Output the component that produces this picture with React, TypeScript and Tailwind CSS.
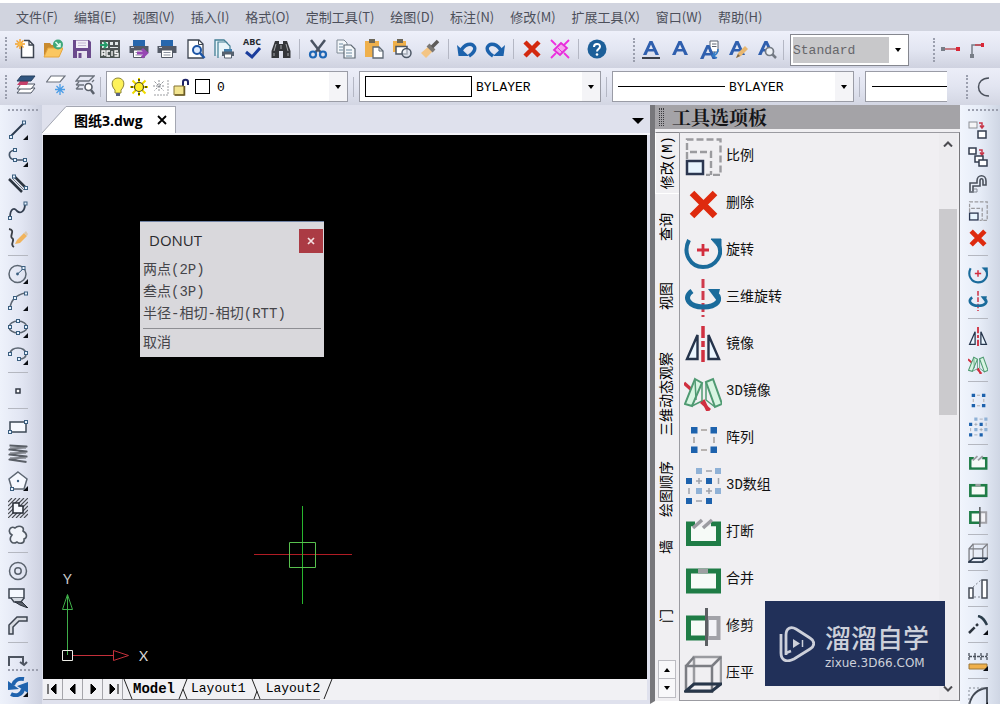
import React from 'react';

type IconProps = { className?: string };
type IconType = React.FC<IconProps>;

interface ToolItem {
  label: string;
  icon: IconType;
}

// All toolbar icons are drawn on a 20x20 grid
const Svg: React.FC<{ children: React.ReactNode; className?: string; size?: number }> = ({ children, className = 'w-5 h-5', size = 20 }) => (
  <svg viewBox={`0 0 ${size} ${size}`} className={`${className} shrink-0`} fill="none" aria-hidden="true">
    {children}
  </svg>
);

const dark = '#3d4450';

/* ---------- Standard toolbar ---------- */

const NewIcon: IconType = () => (
  <Svg>
    <path d="M6.500 5.500V18.500H18.500V6L14 1.500H9" fill="#fff" stroke={dark} strokeWidth="1.500" />
    <path d="M14 1.500V6H18.500" stroke={dark} strokeWidth="1.300" />
    <path d="M5 0V10M0 5H10M1.500 1.500L8.500 8.500M8.500 1.500L1.500 8.500" stroke="#f2a02c" strokeWidth="1.400" />
    <circle cx="5" cy="5" r="2" fill="#fbbd4a" />
  </Svg>
);

const OpenIcon: IconType = () => (
  <Svg>
    <path d="M1 17V4H7L8.500 6H14V10H5Z" fill="#c98a2e" />
    <path d="M1 18L5 9H20L16 18Z" fill="#fbc760" stroke="#e6a53b" />
    <circle cx="15" cy="5.500" r="5" fill="#3fa77b" />
    <path d="M12.500 3L17 7.500M17 4V7.500H13.500" stroke="#e4fff0" strokeWidth="1.500" />
  </Svg>
);

const SaveIcon: IconType = () => (
  <Svg>
    <path d="M1 1H17L19 3V19H1Z" fill="#6b4a8c" />
    <path d="M4 1.500H16V9H4Z" fill="#f1eef6" />
    <path d="M6 4H14M6 6.500H14" stroke="#c4b8d3" />
    <path d="M5 12H15V19H5Z" fill="#e8e3ef" />
    <path d="M6.500 14H9.500V19H6.500Z" fill="#6b4a8c" />
  </Svg>
);

const AcisIcon: IconType = () => (
  <Svg>
    <path d="M0 1H20V19H0Z" fill="#4c5553" />
    <path d="M2 3H8V9H2ZM10 3H13V6H10ZM15 3H18V6H15ZM10 8H18V9H10Z" fill="#dfe9e6" />
    <path d="M0 6H6M4 3L7 6L4 9" stroke="#239b68" strokeWidth="2" />
    <path d="M2 17V12H5V17M2 15H5M10 12H7V17H10M12 12V17M18 12H15V14.500H18V17H14.500" stroke="#fff" strokeWidth="1.300" />
  </Svg>
);

const PrinterBody = () => (
  <>
    <path d="M4 1H16V7H4Z" fill="#2767ad" />
    <path d="M0.500 7H19.500V14H0.500Z" fill="#545a66" />
    <path d="M2 8.500H5" stroke="#c9d1dd" />
    <path d="M4.500 11H15.500V18.500H4.500Z" fill="#fff" stroke="#545a66" />
    <path d="M6.500 13.500H13.500M6.500 16H13.500" stroke="#8b92a0" />
  </>
);

const PlotIcon: IconType = () => (
  <Svg>
    <PrinterBody />
    <path d="M8 14H16M13 10L17.500 14L13 18.500" stroke="#9647b3" strokeWidth="3" />
  </Svg>
);

const PrintIcon: IconType = () => (
  <Svg><PrinterBody /></Svg>
);

const PreviewIcon: IconType = () => (
  <Svg>
    <path d="M2 1H13L17 5V19H2Z" fill="#fff" stroke={dark} strokeWidth="1.300" />
    <path d="M12.500 1V5.500H17" stroke={dark} />
    <circle cx="11" cy="11" r="4" fill="#dcebff" stroke="#1d55a5" strokeWidth="2" />
    <path d="M14 14L18.500 19" stroke="#1d55a5" strokeWidth="2.500" />
  </Svg>
);

const PublishIcon: IconType = () => (
  <Svg>
    <path d="M1 17V1H10L13 4V8" fill="#e9f5fa" stroke="#427e94" strokeWidth="1.300" />
    <path d="M4 19V3H12L16 7V10" fill="#e9f5fa" stroke="#427e94" strokeWidth="1.200" />
    <path d="M10 10H18V13H10Z" fill="#427eac" />
    <path d="M8 12.500H20V17H8Z" fill="#56616f" />
    <path d="M10.500 15H17.500V19H10.500Z" fill="#fff" stroke="#56616f" />
  </Svg>
);

const SpellIcon: IconType = () => (
  <Svg className="w-5 h-5 overflow-visible">
    <text x="0" y="6" fontSize="9" fontWeight="700" fontFamily="Open Sans, sans-serif" fill="#25282e">ABC</text>
    <path d="M3 13L9 18L17 9" stroke="#1b3d9c" strokeWidth="3" />
  </Svg>
);

const FindIcon: IconType = () => (
  <Svg>
    <path d="M4 2H8V5H12V2H16L19.500 12V19H12V12H8V19H0.500V12Z" fill="#34363a" />
    <path d="M5 5L3 12M15 5L17 12M10 6V10M3 14V17M17 14V17" stroke="#a6a8ac" />
  </Svg>
);

const CutIcon: IconType = () => (
  <Svg>
    <path d="M3 1L13 14M17 1L7 14" stroke="#4a5362" strokeWidth="2.500" />
    <circle cx="5" cy="15.500" r="3" stroke="#1d66b5" strokeWidth="2.200" />
    <circle cx="15" cy="15.500" r="3" stroke="#1d66b5" strokeWidth="2.200" />
  </Svg>
);

const CopyIcon: IconType = () => (
  <Svg>
    <path d="M1 1H8L11 4V14H1Z" fill="#f4f7fa" stroke="#7f8994" />
    <path d="M8 6H15L19 10V19H8Z" fill="#f4f7fa" stroke="#5d6873" strokeWidth="1.200" />
    <path d="M3 5H7M3 8H7M3 11H7M10 11H16M10 14H16M10 17H16" stroke="#6d8ba1" />
  </Svg>
);

const PasteIcon: IconType = () => (
  <Svg>
    <path d="M1 2H15V18H1Z" fill="#efb04b" />
    <path d="M5 0H11V4H5Z" fill="#6d6757" />
    <path d="M9 8H15L19 12V19H9Z" fill="#fff" stroke="#5d6873" strokeWidth="1.300" />
    <path d="M15 8V12H19" stroke="#5d6873" />
  </Svg>
);

const PasteBlockIcon: IconType = () => (
  <Svg>
    <path d="M1 2H14V13H1Z" fill="#efb04b" />
    <path d="M5 0H11V4H5Z" fill="#6d6757" />
    <path d="M4 7.500H15V15H4Z" fill="#fff" stroke="#4b5664" strokeWidth="1.500" />
    <circle cx="14.500" cy="14" r="4.500" fill="#dfe5ee" fillOpacity=".6" stroke="#4b5664" strokeWidth="1.500" />
  </Svg>
);

const BrushIcon: IconType = () => (
  <Svg>
    <path d="M1 14L9 7L13 12L6 19Z" fill="#f4c584" />
    <path d="M8 6L14 12" stroke="#7b7875" strokeWidth="4" />
    <path d="M12 8L18 2" stroke="#5d5b5a" strokeWidth="3.500" />
  </Svg>
);

const UndoIcon: IconType = () => (
  <Svg>
    <path d="M4 12C7 5 15 3 17.500 8C19 12 15 15 12 17" stroke="#1c62ac" strokeWidth="3.400" />
    <path d="M0 6L1.500 17H12Z" fill="#1c62ac" />
  </Svg>
);

const RedoIcon: IconType = () => (
  <Svg>
    <path d="M16 12C13 5 5 3 2.500 8C1 12 5 15 8 17" stroke="#1c62ac" strokeWidth="3.400" />
    <path d="M20 6L18.500 17H8Z" fill="#1c62ac" />
  </Svg>
);

const XIcon: IconType = () => (
  <Svg><path d="M3 3L17 17M17 3L3 17" stroke="#d3290f" strokeWidth="4.500" /></Svg>
);

const PurgeIcon: IconType = () => (
  <Svg>
    <path d="M1 1L6 6M19 1L14 6M1 19L6 14M19 19L14 14" stroke="#ee2fe0" strokeWidth="1.800" />
    <path d="M11 4L17 9L10 16L4 11Z" fill="#f5a3ee" stroke="#e52bd8" strokeWidth="1.800" />
    <path d="M8 9L12 13" stroke="#e52bd8" />
  </Svg>
);

const HelpIcon: IconType = () => (
  <Svg>
    <circle cx="10" cy="10" r="9.500" fill="#1d5f99" />
    <path d="M7 8C7 4 13 4 13 7.500C13 10 10 10 10 12.500" stroke="#fff" strokeWidth="2" />
    <circle cx="10" cy="15.500" r="1.300" fill="#fff" />
  </Svg>
);

/* ---------- Text toolbar ---------- */

const LetterA = () => <path d="M2 15L8.500 1H11.500L18 15H14.500L13 11.500H7L5.500 15ZM8 9H12L10 4.500Z" fill="#2f5fae" />;

const TextUnderlineIcon: IconType = () => (
  <Svg><LetterA /><path d="M1 18H19" stroke="#3a3f4a" strokeWidth="2" /></Svg>
);
const TextIcon: IconType = () => (
  <Svg><LetterA /></Svg>
);
const TextNoteIcon: IconType = () => (
  <Svg>
    <path d="M11 1H19V12H11Z" fill="#fff" stroke="#5d6470" />
    <path d="M13 4H17.500M13 6.500H17.500" stroke="#5d6470" />
    <g transform="translate(-1 4)"><LetterA /></g>
    <path d="M19 9C19 13 17 15 14 16M16 12L13.500 16L18 18" stroke="#2f79c6" strokeWidth="1.500" />
  </Svg>
);
const TextEditIcon: IconType = () => (
  <Svg>
    <g transform="translate(-1 0)"><LetterA /></g>
    <path d="M8 18L10 13L17 6L20 9L13 16Z" fill="#e8b770" />
    <path d="M8 18L10 14L12 16Z" fill="#77664e" />
  </Svg>
);
const TextFindIcon: IconType = () => (
  <Svg>
    <g transform="translate(-1 0)"><LetterA /></g>
    <circle cx="12.500" cy="11.500" r="4" fill="#edf0f5" stroke="#747a84" strokeWidth="1.700" />
    <path d="M15.500 14.500L19 18" stroke="#747a84" strokeWidth="2.500" />
  </Svg>
);

const DimLineIcon: IconType = () => (
  <Svg><path d="M2 9H18" stroke="#b85a62" strokeWidth="1.500" /><path d="M0 7H4V11H0Z" fill="#777d87" /><path d="M15 7H19V11H15Z" fill="#da2637" /></Svg>
);
const DimElbowIcon: IconType = () => (
  <Svg><path d="M3 16V5H14" stroke="#777d87" strokeWidth="1.500" /><path d="M6 5H14" stroke="#c9414c" strokeWidth="1.500" /><path d="M1 14H5V18H1Z" fill="#777d87" /><path d="M12 3H15V7H12Z" fill="#da2637" /></Svg>
);
const ArcIcon: IconType = () => (
  <Svg><path d="M17 1C3 1 3 19 17 19" stroke="#4b515c" strokeWidth="1.500" /></Svg>
);

/* ---------- Layer toolbar ---------- */

const LayersIcon: IconType = () => (
  <Svg>
    <path d="M5 13H19L15 18H1Z" fill="#fff" stroke="#4d5563" />
    <path d="M5 9H19L15 14H1Z" fill="#fff" stroke="#4d5563" />
    <path d="M5 5H13L11 10H1Z" fill="#c5406a" />
    <path d="M5 1H19L15 6H1Z" fill="#315680" stroke="#27415f" />
  </Svg>
);
const LayerFreezeIcon: IconType = () => (
  <Svg>
    <path d="M5 1H19L14 7H0.500Z" fill="#fff" stroke="#6b717c" strokeWidth="1.200" />
    <path d="M14 9V20M9 14.500H19M10.500 11L17.500 18M17.500 11L10.500 18" stroke="#4b9de6" strokeWidth="1.300" />
  </Svg>
);
const LayerFindIcon: IconType = () => (
  <Svg>
    <path d="M5 1H19L14 6H1ZM1 10L4 7M1 10H9M17 7L19 5M1 14L4 11M1 14H8" stroke="#6b717c" strokeWidth="1.300" />
    <circle cx="13.500" cy="12" r="3.500" fill="#fff" stroke="#5a606b" strokeWidth="1.600" />
    <path d="M16 15L19 19" stroke="#5a606b" strokeWidth="2.500" />
  </Svg>
);

const BulbIcon: IconType = () => (
  <Svg><path d="M7 13C2 8 4 1 10 1C16 1 18 8 13 13V16H7Z" fill="#fdf25a" stroke="#8d8537" /><path d="M8 16H12V19H8Z" fill="#5b6383" /></Svg>
);
const SunIcon: IconType = () => (
  <Svg>
    <path d="M10 1V19M1 10H19M3.500 3.500L16.500 16.500M16.500 3.500L3.500 16.500" stroke="#f0dc00" strokeWidth="2" />
    <path d="M10 2V4M10 16V18M2 10H4M16 10H18" stroke="#30300c" strokeWidth="1.500" />
    <circle cx="10" cy="10" r="4.500" fill="#ffef2e" stroke="#4c4920" strokeWidth="1.200" />
  </Svg>
);
const ViewportFreezeIcon: IconType = () => (
  <Svg>
    <path d="M9 3V15M3 9H15M4.500 4.500L13.500 13.500M13.500 4.500L4.500 13.500" stroke="#8c8f95" strokeDasharray="2 1" />
    <path d="M18 3V18H4" stroke="#9b9da1" strokeDasharray="2 1" />
  </Svg>
);
const UnlockIcon: IconType = () => (
  <Svg><path d="M12 9V5C12 2 17 2 17 5V8" stroke="#1e2467" strokeWidth="2" /><path d="M3 9H13V18H3Z" fill="#f2e48f" stroke="#837235" /><path d="M13.500 9V18H4" stroke="#6a5a25" strokeWidth="1.500" /></Svg>
);

/* ---------- Draw toolbar ---------- */

const node = '#3b5f80';
const Node: React.FC<{ x: number; y: number }> = ({ x, y }) => (
  <rect x={x - 1.5} y={y - 1.5} width="3" height="3" fill="#e8f3ff" stroke={node} />
);
const Flyout = () => <path d="M20 15V20H15Z" fill="#0b0e14" />;

const LineIcon: IconType = () => (
  <Svg><path d="M3 16L16 3" stroke="#2c3b4e" strokeWidth="2" /><Node x={3} y={17} /><Node x={16} y={2.5} /><Flyout /></Svg>
);
const PolylineIcon: IconType = () => (
  <Svg><path d="M7 3C-1 4 0 12 7 13H17" stroke="#46566a" strokeWidth="1.700" /><Node x={7} y={3} /><Node x={7} y={13} /><Node x={17} y={13} /><Flyout /></Svg>
);
const MultilineIcon: IconType = () => (
  <Svg><path d="M1 5L14 18M6 2L18 14" stroke="#2c3540" strokeWidth="2.500" /><path d="M4 4L16 16" stroke="#6f7780" /><Node x={6} y={2.5} /><Node x={18} y={14} /></Svg>
);
const SplineIcon: IconType = () => (
  <Svg><path d="M2 17C2 6 7 7 9 10C12 13 17 11 17 3" stroke="#343f50" strokeWidth="1.800" /><Node x={2} y={17} /><Node x={17.5} y={2.5} /></Svg>
);
const SketchIcon: IconType = () => (
  <Svg>
    <path d="M1 1C8 2 1 8 4 10C8 12 1 16 6 19" stroke="#3b3f46" strokeWidth="1.800" />
    <path d="M7 16L9 12L16 5L19 8L12 15Z" fill="#f1b45d" />
    <path d="M16 5L18 3L20 6L19 8Z" fill="#d9c9b2" />
  </Svg>
);
const CircleIcon: IconType = () => (
  <Svg><circle cx="9.500" cy="10" r="8.500" stroke="#5c6672" strokeWidth="1.500" /><path d="M9.500 10L15 5" stroke={node} /><circle cx="9.500" cy="10" r="1.400" fill={node} /><Node x={15.5} y={4} /><Flyout /></Svg>
);
const ArcDrawIcon: IconType = () => (
  <Svg><path d="M2 17C3 9 8 4 17 2" stroke="#5c6672" strokeWidth="1.600" /><Node x={2} y={17} /><Node x={7} y={7} /><Node x={18} y={2.5} /><Flyout /></Svg>
);
const EllipseIcon: IconType = () => (
  <Svg><ellipse cx="10" cy="9" rx="9" ry="6" stroke="#5c6672" strokeWidth="1.500" /><Node x={10} y={3} /><Node x={2} y={9} /><Node x={18} y={9} /><Node x={10} y={15} /><Flyout /></Svg>
);
const EllipseArcIcon: IconType = () => (
  <Svg><path d="M2 9C2 1 18 1 18 9C18 13 14 14 11 14" stroke="#5c6672" strokeWidth="1.600" /><Node x={2} y={9} /><Node x={18} y={8} /><Node x={11} y={14} /><Flyout /></Svg>
);
const PointIcon: IconType = () => (
  <Svg><rect x="8" y="8" width="4" height="4" fill="#fff" stroke="#343b47" strokeWidth="1.500" /></Svg>
);
const RectangleIcon: IconType = () => (
  <Svg><rect x="2" y="5" width="16" height="10" fill="#f6f9ff" stroke="#3d4856" strokeWidth="1.500" /><Node x={2} y={15} /><Node x={18} y={5} /></Svg>
);
const HelixIcon: IconType = () => (
  <Svg>
    <path d="M1.500 1.500L18.500 2.500L1.500 5.500L18.500 7.500L1.500 10.500L18.500 12.500L1.500 15.500L18.500 18" stroke="#5a5f67" strokeWidth="2.200" strokeLinejoin="round" />
    <path d="M2 4H18M2 9H18M2 14H18" stroke="#8b8f96" strokeWidth="1.500" />
  </Svg>
);
const PolygonIcon: IconType = () => (
  <Svg><path d="M10 1L19 8L16 18H4L1 8Z" fill="#f6f9ff" stroke="#5c6672" strokeWidth="1.500" /><circle cx="10" cy="10" r="1.200" fill={node} /><Node x={4} y={18} /><Flyout /></Svg>
);
const HatchIcon: IconType = () => (
  <Svg>
    <path d="M0 4L4 0M0 8L8 0M0 12L12 0M0 16L16 0M0 20L20 0M4 20L20 4M8 20L20 8M12 20L20 12M16 20L20 16" stroke="#4a4d53" strokeWidth="1.200" />
    <path d="M5 5H11V8H15V15H5Z" fill="#f6f9ff" stroke="#252a33" strokeWidth="1.500" />
  </Svg>
);
const CloudIcon: IconType = () => (
  <Svg><path d="M4 10C-1 7 2 0 7 3C10 0 17 1 15 6C20 9 19 13 16 14C17 19 11 19 9 17C4 20 0 15 4 10Z" fill="#f1f4fa" stroke="#505862" strokeWidth="1.600" /></Svg>
);
const DonutIcon: IconType = () => (
  <Svg><circle cx="10" cy="10" r="8.500" stroke="#5a626d" strokeWidth="1.500" /><circle cx="10" cy="10" r="3.200" stroke="#5a626d" strokeWidth="1.500" /></Svg>
);
const WipeoutIcon: IconType = () => (
  <Svg><path d="M1 1H16V10H1Z" fill="#f6f9ff" stroke="#3d4450" strokeWidth="1.500" /><path d="M3 10L6 14H13L16 10" fill="#d5dae2" stroke="#3d4450" strokeWidth="1.300" /><path d="M7 14H14L20 20L12 17Z" fill="#5a616c" stroke="#2a303a" /></Svg>
);
const WallIcon: IconType = () => (
  <Svg><path d="M1 19V10L9 2H19V6H11L5 12V19Z" fill="#d9dce3" stroke="#3d4450" strokeWidth="1.500" /></Svg>
);
const TraceIcon: IconType = () => (
  <Svg><path d="M1 15V6H15V13M12 11L16 14L19 11" stroke="#4d5460" strokeWidth="2" /></Svg>
);
const RefreshIcon: IconType = () => (
  <Svg>
    <path d="M16 2C10 1 6 4 5 8" stroke="#1f63ae" strokeWidth="4" />
    <path d="M0 4L11 12L0 13Z" fill="#1f63ae" />
    <path d="M3 17C9 20 14 17 15 12" stroke="#1f63ae" strokeWidth="4" />
    <path d="M9 9L20 5V16Z" fill="#1f63ae" />
    <Flyout />
  </Svg>
);

/* ---------- Modify tools, drawn on a 38x38 grid and shared by the palette and the right toolbar ---------- */

const ScaleTool: IconType = ({ className }) => (
  <Svg size={38} className={className}>
    <path d="M3 12V1.500H36.500V37H22" stroke="#9b9b9f" strokeWidth="2.400" strokeDasharray="7 3" />
    <path d="M3 21V14H27V37" stroke="#9b9b9f" strokeWidth="2.400" strokeDasharray="7 3" />
    <rect x="3" y="23" width="16" height="13" fill="#e8f5ff" stroke="#2b3650" strokeWidth="2.500" />
  </Svg>
);
const DeleteTool: IconType = ({ className }) => (
  <Svg size={38} className={className}><path d="M8 8L31 31M31 8L8 31" stroke="#de2a0e" strokeWidth="6.500" /></Svg>
);
const SmallDeleteTool: IconType = ({ className }) => (
  <Svg size={38} className={className}><path d="M6 6L32 32M32 6L6 32" stroke="#de2a0e" strokeWidth="9" /></Svg>
);
const RotateTool: IconType = ({ className }) => (
  <Svg size={38} className={className}>
    <path d="M5 8C-2 22 7 35 19 35C32 35 40 22 34 12" stroke="#1a6b9b" strokeWidth="4" />
    <path d="M27 7H37V18Z" fill="#1a6b9b" stroke="#1a6b9b" />
    <path d="M19 12V24M13 18H25" stroke="#d22d3e" strokeWidth="2.800" />
  </Svg>
);
const Rotate3DTool: IconType = ({ className }) => (
  <Svg size={38} className={className}>
    <path d="M19 0V38" stroke="#cf3a4c" strokeWidth="3" strokeDasharray="9 3" />
    <path d="M8 12C-2 19 6 28 19 28C34 28 38 20 32 15" stroke="#1a6b9b" strokeWidth="5" />
    <path d="M24 10H36L33 22Z" fill="#1a6b9b" />
  </Svg>
);
const MirrorTool: IconType = ({ className }) => (
  <Svg size={38} className={className}>
    <path d="M19 0V38" stroke="#d03040" strokeWidth="3.500" strokeDasharray="12 3 6 3" />
    <path d="M3 33H13.500V9ZM24.500 9V33H35Z" fill="#eaf6ff" stroke="#25344b" strokeWidth="2.400" />
  </Svg>
);
const Mirror3DTool: IconType = ({ className }) => (
  <Svg size={38} className={className}>
    <path d="M0 10L10 19M19 27L24 38" stroke="#d03040" strokeWidth="3.500" />
    <path d="M11 6L18 10L8 33L1 31Z" fill="#d8f5e2" stroke="#4f9a72" strokeWidth="2" />
    <path d="M18 10V28L8 33M11 6L12 27" stroke="#4f9a72" strokeWidth="1.500" />
    <path d="M22 9L29 6L38 31L31 34Z" fill="#d8f5e2" stroke="#4f9a72" strokeWidth="2" />
    <path d="M22 9V27L31 34" stroke="#4f9a72" strokeWidth="1.500" />
    <path d="M17 29L26 37" stroke="#d03040" strokeWidth="3" />
  </Svg>
);
const ArrayTool: IconType = ({ className }) => (
  <Svg size={38} className={className}>
    <path d="M17 10H23M17 30H23M10 17V23M30 17V23" stroke="#a49f9a" strokeWidth="1.500" />
    <path d="M7 7H13.500V13.500H7ZM26.500 7H33V13.500H26.500ZM7 26.500H13.500V33H7ZM26.500 26.500H33V33H26.500Z" fill="#1d62ad" />
  </Svg>
);
const Array3DTool: IconType = ({ className }) => (
  <Svg size={38} className={className}>
    <path d="M22 4H28M34.500 11V17M5 21V27M12 34H18M12 14H18M15 11V17M22 24H28M25 21V27" stroke="#9da3ac" strokeWidth="1.500" />
    <path d="M12 1H18V7H12ZM31 1H37V7H31ZM12 21H18V27H12ZM31 21H37V27H31Z" fill="#8fb1d6" />
    <path d="M2 11H8V17H2ZM22 11H28V17H22ZM2 31H8V37H2ZM22 31H28V37H22Z" fill="#1d62ad" />
  </Svg>
);
const BreakTool: IconType = ({ className }) => (
  <Svg size={38} className={className}>
    <path d="M11 10H4.500V29.500H34.500V10H27" stroke="#1f7c46" strokeWidth="5" />
    <path d="M7 12.500H32V27H7Z" fill="#f6faf7" />
    <path d="M9 14L18 6M19 14L28 6" stroke="#9b9ca1" strokeWidth="3.500" />
  </Svg>
);
const JoinTool: IconType = ({ className }) => (
  <Svg size={38} className={className}>
    <rect x="4.500" y="10" width="30" height="20" fill="#f6faf7" stroke="#1f7c46" strokeWidth="5" />
    <path d="M14 10H24" stroke="#9da0a2" strokeWidth="5" />
  </Svg>
);
const TrimTool: IconType = ({ className }) => (
  <Svg size={38} className={className}>
    <path d="M23 10H34.500V30H23Z" fill="#f3f3f7" stroke="#a2a2a8" strokeWidth="4" />
    <path d="M23 10H4.500V30H23" fill="#f6faf7" stroke="#1f7c46" strokeWidth="5" />
    <path d="M22.500 0V38" stroke="#5c5f63" strokeWidth="3" />
  </Svg>
);
const FlattenTool: IconType = ({ className }) => (
  <Svg size={38} className={className}>
    <path d="M10 2H37V29H10Z" stroke="#9a9ba0" strokeWidth="2.500" />
    <path d="M2 11H28V37H2ZM2 11L10 2M28 11L37 2" stroke="#7b7d83" strokeWidth="2.500" />
    <path d="M2 36L10 29H37L28 36Z" stroke="#27364a" strokeWidth="3" />
  </Svg>
);

const MoveTool: IconType = () => (
  <Svg><rect x="1" y="2" width="8" height="6" fill="#f5f5f6" stroke="#8c8f95" /><path d="M11 3H14V7M12 5.500L14 8L16 5.500" stroke="#c8374a" strokeWidth="1.500" /><rect x="10" y="11" width="8" height="7" fill="#fff" stroke="#333c4e" strokeWidth="1.500" /></Svg>
);
const CopyTool: IconType = () => (
  <Svg><rect x="1" y="1" width="7" height="6" fill="#fff" stroke="#333c4e" strokeWidth="1.500" /><path d="M11 3H14V7M12 5.500L14 8L16 5.500" stroke="#c8374a" strokeWidth="1.500" /><rect x="7" y="9" width="8" height="6" fill="#fff" stroke="#333c4e" strokeWidth="1.500" /><rect x="11" y="13" width="8" height="6" fill="#fff" stroke="#333c4e" strokeWidth="1.500" /></Svg>
);
const OffsetTool: IconType = () => (
  <Svg><path d="M2 18V9H9V7C9 0 18 0 18 7V11H15V7C15 4 12 4 12 7V12H5V18Z" stroke="#4b525d" strokeWidth="1.600" /><path d="M2 18H9V15H6" stroke="#858b95" /></Svg>
);
const LengthenTool: IconType = () => (
  <Svg><rect x="1" y="9" width="4" height="10" fill="#fff" stroke="#464c57" strokeWidth="1.500" /><rect x="14" y="1" width="5" height="18" fill="#fff" stroke="#464c57" strokeWidth="1.500" /><path d="M5 8L13 1M6 18H13" stroke="#80858f" strokeDasharray="2 2" /></Svg>
);
const ExtendTool: IconType = () => (
  <Svg><path d="M1 18L10 9" stroke="#2c343e" strokeWidth="2.500" strokeDasharray="8 2" /><path d="M10 1C15 2 17 6 19 10" stroke="#2c3e4c" strokeWidth="2.500" /><Flyout /></Svg>
);
const MeasureTool: IconType = () => (
  <Svg><path d="M1 2V9M7 2V9M13 2V9M19 2V9M1 5.500H19" stroke="#4a515c" strokeWidth="1.300" strokeDasharray="3 1" /><path d="M1 13H19V18H1Z" fill="#efb04b" stroke="#9c783d" /><Flyout /></Svg>
);
const FilletTool: IconType = () => (
  <Svg><path d="M1 19C3 8 9 2 19 1V19" stroke="#424954" strokeWidth="1.800" /><path d="M1 17V1H15" stroke="#858b95" strokeDasharray="2 2" /><Flyout /></Svg>
);

/* ---------- Data ---------- */

const MENUS = ['文件(F)', '编辑(E)', '视图(V)', '插入(I)', '格式(O)', '定制工具(T)', '绘图(D)', '标注(N)', '修改(M)', '扩展工具(X)', '窗口(W)', '帮助(H)'];

const FILE_TOOLS: ToolItem[] = [
  { label: '新建', icon: NewIcon },
  { label: '打开', icon: OpenIcon },
  { label: '保存', icon: SaveIcon },
  { label: 'ACIS', icon: AcisIcon },
  { label: '发布', icon: PlotIcon },
  { label: '打印', icon: PrintIcon },
  { label: '打印预览', icon: PreviewIcon },
  { label: '页面设置', icon: PublishIcon },
  { label: '拼写检查', icon: SpellIcon },
  { label: '查找', icon: FindIcon },
];
const EDIT_TOOLS: ToolItem[] = [
  { label: '剪切', icon: CutIcon },
  { label: '复制', icon: CopyIcon },
  { label: '粘贴', icon: PasteIcon },
  { label: '粘贴为块', icon: PasteBlockIcon },
  { label: '特性匹配', icon: BrushIcon },
];
const HISTORY_TOOLS: ToolItem[] = [
  { label: '撤销', icon: UndoIcon },
  { label: '重做', icon: RedoIcon },
];
const CLEAN_TOOLS: ToolItem[] = [
  { label: '删除', icon: XIcon },
  { label: '清理', icon: PurgeIcon },
];
const TEXT_TOOLS: ToolItem[] = [
  { label: '多行文字', icon: TextUnderlineIcon },
  { label: '单行文字', icon: TextIcon },
  { label: '文字样式', icon: TextNoteIcon },
  { label: '编辑文字', icon: TextEditIcon },
  { label: '查找文字', icon: TextFindIcon },
];
const DIM_TOOLS: ToolItem[] = [
  { label: '线性标注', icon: DimLineIcon },
  { label: '引线', icon: DimElbowIcon },
];
const LAYER_TOOLS: ToolItem[] = [
  { label: '图层', icon: LayersIcon },
  { label: '冻结图层', icon: LayerFreezeIcon },
  { label: '浏览图层', icon: LayerFindIcon },
];

const DRAW_GROUPS: ToolItem[][] = [
  [
    { label: '直线', icon: LineIcon },
    { label: '多段线', icon: PolylineIcon },
    { label: '多线', icon: MultilineIcon },
    { label: '样条曲线', icon: SplineIcon },
    { label: '徒手画', icon: SketchIcon },
  ],
  [
    { label: '圆', icon: CircleIcon },
    { label: '圆弧', icon: ArcDrawIcon },
    { label: '椭圆', icon: EllipseIcon },
    { label: '椭圆弧', icon: EllipseArcIcon },
  ],
  [{ label: '点', icon: PointIcon }],
  [
    { label: '矩形', icon: RectangleIcon },
    { label: '螺旋', icon: HelixIcon },
    { label: '多边形', icon: PolygonIcon },
    { label: '填充', icon: HatchIcon },
    { label: '云线', icon: CloudIcon },
  ],
  [
    { label: '圆环', icon: DonutIcon },
    { label: '区域覆盖', icon: WipeoutIcon },
    { label: '墙', icon: WallIcon },
  ],
];

const MODIFY_GROUPS: ToolItem[][] = [
  [
    { label: '移动', icon: MoveTool },
    { label: '复制对象', icon: CopyTool },
    { label: '偏移', icon: OffsetTool },
    { label: '比例', icon: ScaleTool },
    { label: '删除', icon: SmallDeleteTool },
  ],
  [
    { label: '旋转', icon: RotateTool },
    { label: '三维旋转', icon: Rotate3DTool },
  ],
  [
    { label: '镜像', icon: MirrorTool },
    { label: '3D镜像', icon: Mirror3DTool },
  ],
  [
    { label: '阵列', icon: ArrayTool },
    { label: '3D数组', icon: Array3DTool },
  ],
  [
    { label: '打断', icon: BreakTool },
    { label: '合并', icon: JoinTool },
    { label: '修剪', icon: TrimTool },
  ],
  [{ label: '压平', icon: FlattenTool }],
  [{ label: '拉长', icon: LengthenTool }],
  [{ label: '延伸', icon: ExtendTool }],
  [{ label: '测量', icon: MeasureTool }],
  [{ label: '圆角', icon: FilletTool }],
];

const PALETTE_ITEMS: ToolItem[] = [
  { label: '比例', icon: ScaleTool },
  { label: '删除', icon: DeleteTool },
  { label: '旋转', icon: RotateTool },
  { label: '三维旋转', icon: Rotate3DTool },
  { label: '镜像', icon: MirrorTool },
  { label: '3D镜像', icon: Mirror3DTool },
  { label: '阵列', icon: ArrayTool },
  { label: '3D数组', icon: Array3DTool },
  { label: '打断', icon: BreakTool },
  { label: '合并', icon: JoinTool },
  { label: '修剪', icon: TrimTool },
  { label: '压平', icon: FlattenTool },
];

const PALETTE_TABS = [
  { label: '修改(M)', height: 'h-[62px]' },
  { label: '查询', height: 'h-[66px]' },
  { label: '视图', height: 'h-[72px]' },
  { label: '三维动态观察', height: 'h-[124px]' },
  { label: '绘图顺序', height: 'h-[66px]' },
  { label: '墙', height: 'h-[50px]' },
  { label: '门', height: 'h-[88px]' },
];

/* ---------- Shared pieces ---------- */

const Grip = () => <div className="h-6 border-l-2 border-dotted border-[#9b9fae]" />;
const Separator = () => <div className="h-5 w-px bg-[#b4b7c4]" />;

const ToolGroup: React.FC<{ items: ToolItem[]; className?: string }> = ({ items, className = '' }) => (
  <div className={`flex items-center justify-between ${className}`}>
    {items.map(({ label, icon: Icon }) => (
      <button key={label} type="button" aria-label={label} className="w-5 h-5">
        <Icon />
      </button>
    ))}
  </div>
);

const Combo: React.FC<{ label: string; value: string; className?: string; children?: React.ReactNode }> = ({ label, value, className = '', children }) => (
  <div className={`relative flex items-center h-[31px] bg-white border border-[#9a9ca6] ${className}`}>
    {children}
    <select aria-label={label} className="flex-1 min-w-0 h-full pl-1 pt-[2px] appearance-none bg-transparent outline-none text-[13px]">
      <option>{value}</option>
    </select>
    <div className="absolute right-0 inset-y-0 w-[18px] flex items-center justify-center bg-[#f4f4f7] pointer-events-none">
      <div className="border-x-[3px] border-t-4 border-x-transparent border-t-black" />
    </div>
  </div>
);

const SideTools: React.FC<{ groups: ToolItem[][] }> = ({ groups }) => (
  <>
    {groups.map((group, i) => (
      <div key={i} className="shrink-0">
        {i > 0 && <div className="h-[9px] flex items-center"><div className="w-5 h-px bg-[#b4b7c0]" /></div>}
        {group.map(({ label, icon: Icon }) => (
          <button key={label} type="button" aria-label={label} className="flex items-center h-[27px] w-5">
            <Icon />
          </button>
        ))}
      </div>
    ))}
  </>
);

/* ---------- Sections ---------- */

const MenuBar = () => (
  <nav className="h-7 shrink-0 flex items-center gap-4 pl-4 bg-[#d1d4df] text-[13px] text-[#4c4f5a] whitespace-nowrap font-['Noto_Sans_CJK_SC',sans-serif]">
    {MENUS.map((menu) => (
      <button key={menu} type="button">{menu}</button>
    ))}
  </nav>
);

const StandardToolbar = () => (
  <div className="h-[37px] shrink-0 flex items-center bg-linear-to-b from-[#eef0fa] via-[#e3e6f2] to-[#cfd2e0]">
    <div className="flex items-center gap-2 pl-[5px] pb-[2px]">
      <Grip />
      <ToolGroup items={FILE_TOOLS} className="w-[276px]" />
      <Separator />
      <ToolGroup items={EDIT_TOOLS} className="w-[132px]" />
      <Separator />
      <ToolGroup items={HISTORY_TOOLS} className="w-12" />
      <Separator />
      <ToolGroup items={CLEAN_TOOLS} className="w-12" />
      <Separator />
      <ToolGroup items={[{ label: '帮助', icon: HelpIcon }]} />
    </div>
    <div className="flex items-center gap-[6px] pl-[26px]">
      <Grip />
      <ToolGroup items={TEXT_TOOLS} className="w-[136px]" />
      <Separator />
      <div className="relative w-[119px] h-8 flex p-[2px] bg-white border border-[#85878f]">
        <select aria-label="文字样式" className="w-[96px] pl-0 pt-[2px] appearance-none bg-[#c8c8ca] outline-none text-[13px] text-[#66666a]">
          <option>Standard</option>
        </select>
        <div className="flex-1 flex items-center justify-center">
          <div className="border-x-[3px] border-t-4 border-x-transparent border-t-black" />
        </div>
      </div>
    </div>
    <div className="flex items-center gap-[6px] pl-6">
      <Grip />
      <ToolGroup items={DIM_TOOLS} className="w-12" />
    </div>
  </div>
);

const LayerToolbar = () => (
  <div className="h-[37px] shrink-0 flex items-center bg-linear-to-b from-[#eceef8] via-[#e2e5f1] to-[#d3d6e3]">
    <div className="flex flex-1 items-center gap-[5px] pl-[5px]">
      <Grip />
      <ToolGroup items={LAYER_TOOLS} className="w-[79px] ml-1 pb-1" />
      <Separator />
      <Combo label="图层" value="0" className="w-[242px]">
        <div className="flex items-center gap-px pl-px">
          <BulbIcon />
          <SunIcon />
          <ViewportFreezeIcon />
          <UnlockIcon />
          <div className="w-[15px] h-[15px] ml-[3px] mr-[3px] border border-black" />
        </div>
      </Combo>
      <Separator />
      <Combo label="颜色" value="BYLAYER" className="w-[242px]">
        <div className="w-[107px] h-[21px] ml-[5px] border border-black" />
      </Combo>
      <Separator />
      <Combo label="线型" value="BYLAYER" className="w-[242px]">
        <div className="w-[107px] h-px ml-[5px] bg-black" />
      </Combo>
      <Separator />
      <div className="flex items-center h-[31px] w-[82px] pl-[6px] bg-white border border-r-0 border-[#9a9ca6]">
        <div className="flex-1 h-px bg-black" />
      </div>
    </div>
    <div className="flex items-center gap-1 pr-2">
      <Grip />
      <ToolGroup items={[{ label: '圆弧标注', icon: ArcIcon }]} />
    </div>
  </div>
);

const DonutPrompt = () => (
  <div role="dialog" aria-label="DONUT" className="absolute left-[97px] top-[86px] w-[184px] h-[136px] bg-[#d9d8dc] border-t border-[#7183a5] text-[14px] leading-[22px] text-[#45454a]">
    <div className="flex items-start justify-between pl-[9px] pr-px pt-[7px]">
      <span className="text-[15px] text-[#2a2a2e] font-['Open_Sans',sans-serif]">DONUT</span>
      <button type="button" aria-label="关闭" className="w-6 h-6 flex items-center justify-center bg-[#ab3b44]">
        <svg viewBox="0 0 8 8" className="w-2 h-2"><path d="M1 1L7 7M7 1L1 7" stroke="#f3dfe0" strokeWidth="1.700" /></svg>
      </button>
    </div>
    <div className="flex flex-col items-start pl-[3px] pt-[6px]">
      <button type="button">两点(2P)</button>
      <button type="button">叁点(3P)</button>
      <button type="button">半径-相切-相切(RTT)</button>
    </div>
    <div className="mx-[3px] my-[3px] h-px bg-[#8e8e93]" />
    <button type="button" className="ml-[3px]">取消</button>
  </div>
);

const DrawingCanvas = () => (
  <div className="relative flex-1 min-h-0 bg-black overflow-hidden">
    <DonutPrompt />
    {/* Crosshair with pick box */}
    <svg viewBox="0 0 98 98" className="absolute left-[211px] top-[371px] w-[98px] h-[98px]" fill="none">
      <path d="M0 48.500H98" stroke="#b01c24" />
      <path d="M48.500 0V98" stroke="#28b52e" />
      <path d="M35.500 36.500H61.500V61.500H35.500Z" stroke="#58c04e" />
    </svg>
    {/* UCS icon */}
    <svg viewBox="0 0 110 105" className="absolute left-[10px] bottom-[9px] w-[110px] h-[105px]" fill="none">
      <path d="M14.500 90V30M9.500 44.500L14.500 29.500L19.500 44.500Z" stroke="#3fae49" />
      <path d="M19 90.500H60M60.500 85.500L75.500 90.500L60.500 95.500Z" stroke="#c3303a" />
      <path d="M9.500 85.500H19.500V95.500H9.500Z" stroke="#ecece6" />
      <text x="10" y="19" fontSize="14" fontFamily="Lato, sans-serif" fill="#c8c8c8">Y</text>
      <text x="86" y="96" fontSize="14" fontFamily="Lato, sans-serif" fill="#d8d8d8">X</text>
    </svg>
  </div>
);

const NAV_PATHS = [
  { label: '第一个', d: 'M5 5V15M13 5V15L8 10Z' },
  { label: '上一个', d: 'M12 5V15L7 10Z' },
  { label: '下一个', d: 'M8 5V15L13 10Z' },
  { label: '最后一个', d: 'M15 5V15M7 5V15L12 10Z' },
];

const SheetTabs = () => (
  <div className="h-[21px] shrink-0 flex items-stretch bg-[#f1f1f4] text-[13px]">
    {NAV_PATHS.map((nav) => (
      <button key={nav.label} type="button" aria-label={nav.label} className="w-5 border-r border-b border-[#a5a5aa]">
        <svg viewBox="0 0 20 20" className="w-5 h-5"><path d={nav.d} fill="#000" stroke="#000" /></svg>
      </button>
    ))}
    <div className="flex items-center border-b border-[#77777c]">
      <svg viewBox="0 0 10 20" className="w-[10px] h-5"><path d="M1 0L9 20" stroke="#222" /></svg>
      <button type="button" className="text-[14px] font-bold">Model</button>
      <svg viewBox="0 0 16 20" className="w-4 h-5"><path d="M12 0L4 20M8 10L12 20" stroke="#222" fill="none" /></svg>
      <button type="button">Layout1</button>
      <svg viewBox="0 0 20 20" className="w-5 h-5"><path d="M6 0L14 20M11 12L8 20" stroke="#222" fill="none" /></svg>
      <button type="button">Layout2</button>
    </div>
    <svg viewBox="0 0 14 20" className="w-[14px] h-5"><path d="M12 0L4 20" stroke="#222" /></svg>
  </div>
);

const DocumentArea = () => (
  <main className="flex-1 min-w-0 flex flex-col bg-[#dfe1ed]">
    <div className="h-[30px] shrink-0 flex items-end justify-between pr-[6px] border-b-2 border-[#f5f5fa]">
      <div className="flex h-[27px]">
        <svg viewBox="0 0 28 27" className="w-7 h-[27px]"><path d="M0 27L24 1H28V27Z" fill="#fff" /><path d="M0 27L24 .5H28" fill="none" stroke="#a4a7b2" /></svg>
        <div className="flex items-center gap-[14px] pl-1 pr-2 bg-white border-t border-r border-[#a4a7b2] text-[14px] font-bold font-['Open_Sans','Noto_Sans_CJK_SC',sans-serif]">
          <span>图纸3.dwg</span>
          <button type="button" aria-label="关闭图纸">
            <svg viewBox="0 0 10 10" className="w-[10px] h-[10px]"><path d="M1 1L9 9M9 1L1 9" stroke="#000" strokeWidth="1.800" /></svg>
          </button>
        </div>
      </div>
      <button type="button" aria-label="文档列表" className="mb-[9px] border-x-[6px] border-t-[6px] border-x-transparent border-t-black" />
    </div>
    <div className="flex-1 min-h-0 flex flex-col pl-px pr-[3px] pb-1">
      <DrawingCanvas />
      <SheetTabs />
    </div>
  </main>
);

const Watermark = () => (
  <div className="absolute right-[14px] bottom-[14px] w-[180px] h-[85px] flex items-center gap-[10px] pl-[14px] bg-[#213059] text-[#cdd0da]">
    <svg viewBox="0 0 36 36" className="w-9 h-9 shrink-0" fill="none" stroke="#cdd0da">
      <path d="M7 29V9C7 2 12 0 17 3L31 12C36 15 36 20 31 23L15 33C7 37 2 34 2 27V8" strokeWidth="2.800" />
      <path d="M7 27L12 25" strokeWidth="2.500" />
      <path d="M14 13V22L21 17.500Z" fill="#cdd0da" stroke="none" />
      <path d="M23.500 14V21" strokeWidth="1.500" />
    </svg>
    <div className="flex flex-col">
      <span className="text-[26px] leading-[38px] font-medium font-['Noto_Sans_CJK_SC',sans-serif]">溜溜自学</span>
      <span className="text-[12px] leading-[14px] font-['DejaVu_Sans',sans-serif]">zixue.3D66.COM</span>
    </div>
  </div>
);

const ToolPalette = () => (
  <aside className="w-[310px] shrink-0 flex flex-col bg-[#f0eff2] border-l-[5px] border-b-[3px] border-l-[#77777b] border-b-white">
    <header className="h-6 shrink-0 flex items-center gap-2 pl-1 bg-[#a4a3a7]">
      <div className="flex gap-px">
        <div className="h-[18px] border-l border-dotted border-[#3c3c40]" />
        <div className="h-[18px] border-l border-dotted border-[#3c3c40]" />
        <div className="h-[18px] border-l border-dotted border-[#3c3c40]" />
      </div>
      <h2 className="text-[19px] leading-6 font-bold text-[#151518] font-['Noto_Serif_CJK_SC','Noto_Sans_CJK_SC',serif]">工具选项板</h2>
    </header>
    <div className="flex-1 min-h-0 flex pt-[3px]">
      <div className="w-6 shrink-0 flex flex-col items-stretch">
        {PALETTE_TABS.map((tab, i) => (
          <button
            key={tab.label}
            type="button"
            className={`${tab.height} shrink-0 flex items-center justify-center text-[14px] leading-[18px] whitespace-nowrap ${i === 0 ? 'border-t border-l border-b border-t-[#85858a] border-l-white border-b-white' : ''}`}
          >
            <span className="[writing-mode:vertical-rl] [text-orientation:sideways] rotate-180">{tab.label}</span>
          </button>
        ))}
        <div className="mx-[3px] mt-auto mb-[3px] flex flex-col border border-[#bcbcc2] bg-[#f8f8fa]">
          <button type="button" aria-label="向上" className="h-[18px] flex items-center justify-center border-b border-[#bcbcc2]">
            <span className="border-x-[3px] border-b-4 border-x-transparent border-b-black" />
          </button>
          <button type="button" aria-label="向下" className="h-[18px] flex items-center justify-center">
            <span className="border-x-[3px] border-t-4 border-x-transparent border-t-black" />
          </button>
        </div>
      </div>
      <div className="relative flex-1 flex border border-[#9b9ba1] border-r-[#77777b]">
        <ul className="flex-1 overflow-hidden">
          {PALETTE_ITEMS.map(({ label, icon: Icon }) => (
            <li key={label}>
              <button type="button" className="flex items-center gap-1 h-[47px] pl-1 text-[14px] text-[#111]">
                <Icon className="w-[38px] h-[38px]" />
                <span>{label}</span>
              </button>
            </li>
          ))}
        </ul>
        {/* Scrollbar */}
        <div className="w-[18px] mr-[2px] flex flex-col items-center bg-[#edecef]">
          <button type="button" aria-label="向上滚动" className="h-[22px] w-full flex items-center justify-center">
            <svg viewBox="0 0 10 6" className="w-[10px] h-[6px]"><path d="M1 5.500L5 1.500L9 5.500" fill="none" stroke="#4b4b50" strokeWidth="2" /></svg>
          </button>
          <div className="flex-1 w-full flex flex-col pt-[54px]">
            <div className="h-[206px] bg-[#cbcacd]" />
          </div>
          <button type="button" aria-label="向下滚动" className="h-[22px] w-full flex items-center justify-center">
            <svg viewBox="0 0 10 6" className="w-[10px] h-[6px]"><path d="M1 .5L5 4.500L9 .5" fill="none" stroke="#4b4b50" strokeWidth="2" /></svg>
          </button>
        </div>
        <Watermark />
      </div>
    </div>
  </aside>
);

const App: React.FC = () => {
  return (
    <div className="h-screen flex flex-col overflow-hidden bg-[#d5d8e4] border-t-[3px] border-white text-black font-['Liberation_Mono','Noto_Sans_CJK_SC',monospace]">
      <MenuBar />
      <StandardToolbar />
      <LayerToolbar />
      <div className="flex-1 min-h-0 flex">
        {/* Draw toolbar */}
        <div className="w-[42px] shrink-0 flex flex-col pl-2 overflow-hidden bg-linear-to-r from-[#eef2fb] via-[#e2e6f3] to-[#cdd1e0]">
          <div className="w-[30px] shrink-0 mt-1 mb-[5px] border-t-2 border-dotted border-[#9b9fae]" />
          <div className="flex-1 min-h-0 overflow-hidden">
            <SideTools groups={[...DRAW_GROUPS, [{ label: '轨迹', icon: TraceIcon }]]} />
          </div>
          <div className="w-[30px] shrink-0 mb-[6px] border-t-2 border-dotted border-[#9b9fae]" />
          <button type="button" aria-label="重生成" className="w-5 h-5 shrink-0 mb-[7px]">
            <RefreshIcon />
          </button>
        </div>
        <DocumentArea />
        <ToolPalette />
        {/* Modify toolbar */}
        <div className="w-10 shrink-0 flex flex-col pl-2 overflow-hidden bg-linear-to-r from-[#f1f5fd] via-[#e6ecf7] to-[#cfd6e4]">
          <div className="w-[30px] shrink-0 mt-1 mb-[5px] border-t-2 border-dotted border-[#9b9fae]" />
          <SideTools groups={MODIFY_GROUPS} />
        </div>
      </div>
    </div>
  );
};

export default App;
